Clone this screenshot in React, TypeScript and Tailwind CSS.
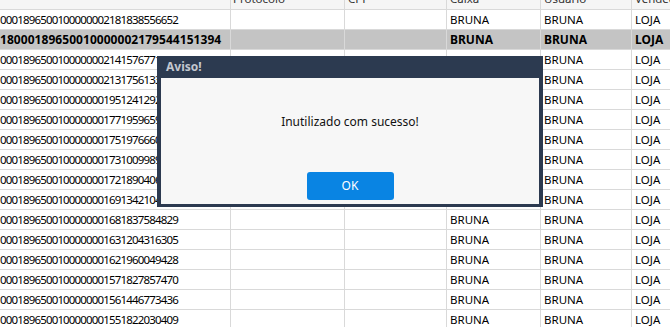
import React from "react";

const keys = [
  "0001896500100000002181838556652",
  "18000189650010000002179544151394",
  "0001896500100000002141576771340",
  "0001896500100000002131756133218",
  "0001896500100000001951241292607",
  "0001896500100000001771959659512",
  "0001896500100000001751976660834",
  "0001896500100000001731009989176",
  "0001896500100000001721890406291",
  "0001896500100000001691342104563",
  "0001896500100000001681837584829",
  "0001896500100000001631204316305",
  "0001896500100000001621960049428",
  "0001896500100000001571827857470",
  "0001896500100000001561446773436",
  "0001896500100000001551822030409",
];

const cellBase = "h-full flex items-center border-r border-[#d9d9d9] overflow-hidden whitespace-nowrap";

export default function App() {
  return (
    <div
      className="relative w-[670px] h-[327px] overflow-hidden bg-white text-black"
      style={{ fontFamily: '"Noto Sans", "Open Sans", sans-serif' }}
    >
      <div className="flex flex-col w-[700px]">
        <div className="flex h-[10px] border-b border-[#d9d9d9] bg-[#f5f5f5] text-[11.5px] text-[#333] leading-[20px] overflow-hidden">
          <div className="w-[231px] h-full border-r border-[#d9d9d9] flex items-end"></div>
          <div className="w-[114px] h-full border-r border-[#d9d9d9] flex items-end pl-[2px]"><span className="leading-[20px]">Protocolo</span></div>
          <div className="w-[102px] h-full border-r border-[#d9d9d9] flex items-end pl-[3px]"><span>CPF</span></div>
          <div className="w-[94px] h-full border-r border-[#d9d9d9] flex items-end pl-[3px]"><span>Caixa</span></div>
          <div className="w-[91px] h-full border-r border-[#d9d9d9] flex items-end pl-[3px]"><span>Usuario</span></div>
          <div className="flex-1 h-full flex items-end pl-[3px]"><span>Vendedor</span></div>
        </div>
        {keys.map((k, i) => {
          const sel = i === 1;
          return (
            <div
              key={i}
              className={
                "flex h-[20px] border-b border-[#d9d9d9] " +
                (sel ? "bg-[#c4c4c4] font-bold text-[12px]" : "text-[11.5px]")
              }
            >
              <div className={cellBase + " w-[231px]"}>
                <span className={sel ? "tracking-[0.05px]" : "tracking-[-0.84px]"}>{k}</span>
              </div>
              <div className={cellBase + " w-[114px]"}></div>
              <div className={cellBase + " w-[102px]"}></div>
              <div className={cellBase + " w-[94px] pl-[3px]"}>BRUNA</div>
              <div className={cellBase + " w-[91px] pl-[3px]"}>BRUNA</div>
              <div className="flex-1 h-full flex items-center pl-[3px]">LOJA</div>
            </div>
          );
        })}
      </div>

      <div className="absolute left-[157px] top-[56px] w-[386px] h-[151px] bg-[#2c3a50] px-[4px] pb-[3px] flex flex-col">
        <div className="h-[22px] flex items-center pl-[5px] text-[12px] font-bold text-[#c3c7cf]">Aviso!</div>
        <div className="flex-1 bg-[#f7f7f7] flex flex-col items-center">
          <div className="flex-1 flex items-center justify-center text-[12px] text-[#111] pb-[6px]">
            Inutilizado com sucesso!
          </div>
          <button className="w-[87px] h-[28px] mb-[4px] rounded-[3px] bg-[#0984e3] text-white text-[12px] flex items-center justify-center">
            OK
          </button>
        </div>
      </div>
    </div>
  );
}
